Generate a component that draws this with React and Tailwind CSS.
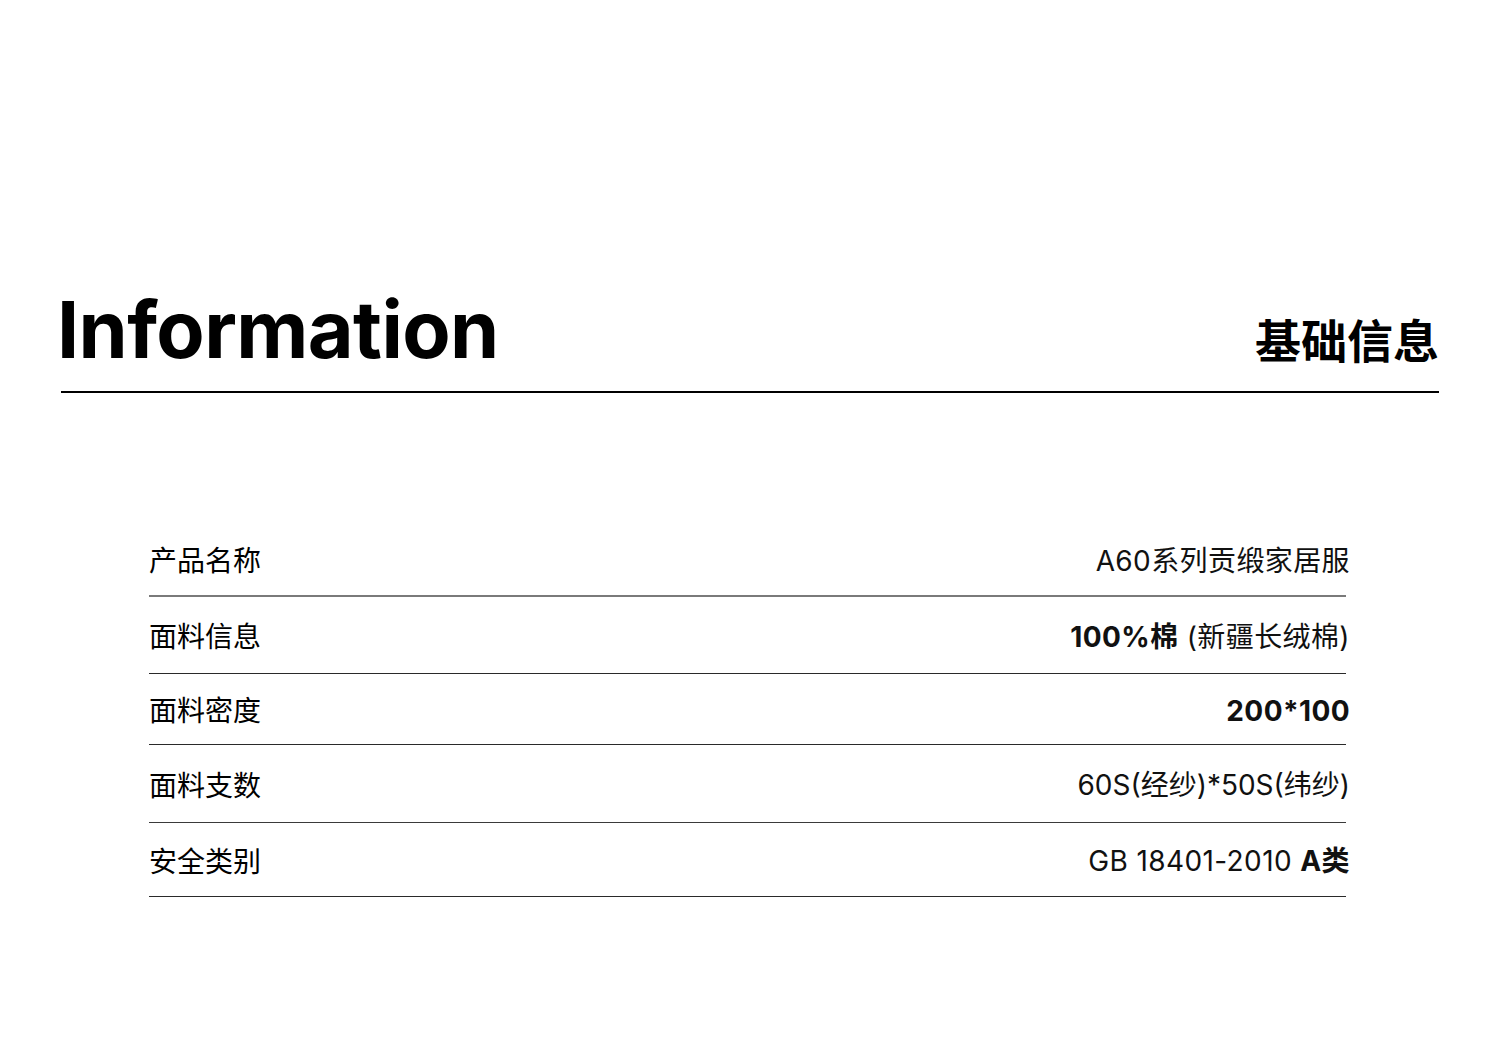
import React from "react";

const rows = [
  { label: "产品名称", h: "h-[74px]", value: <span>A60系列贡缎家居服</span>, border: "border-[#7a7a7a]" },
  {
    label: "面料信息",
    h: "h-[77px]",
    value: (
      <span>
        <span className="font-bold">100%棉</span>&nbsp;(新疆长绒棉)
      </span>
    ),
    border: "border-[#2a2a2a]",
  },
  { label: "面料密度", h: "h-[71px]", value: <span className="font-bold">200*100</span>, border: "border-[#2a2a2a]" },
  { label: "面料支数", h: "h-[78px]", value: <span className="tracking-[0px]">60S(经纱)*50S(纬纱)</span>, border: "border-[#3a3a3a]" },
  {
    label: "安全类别",
    h: "h-[74px]",
    value: (
      <span>
        GB 18401-2010&nbsp;<span className="font-bold">A类</span>
      </span>
    ),
    border: "border-[#2a2a2a]",
  },
];

export default function App() {
  return (
    <div className="w-[1500px] h-[1057px] bg-white text-black font-['Inter','Noto_Sans_CJK_SC',sans-serif]">
      <div className="px-[61px] pt-[290px]">
        <div className="flex items-end justify-between pb-[22px] border-b-2 border-black">
          <div className="text-[79px] leading-none font-bold tracking-[-0.6px] -ml-[4px]">Information</div>
          <div className="text-[46px] leading-none font-bold font-['Noto_Sans_CJK_SC',sans-serif] mb-[8px]">基础信息</div>
        </div>
      </div>
      <div className="ml-[149px] w-[1197px] mt-[130px]">
        {rows.map((r, i) => (
          <div key={i} className={`flex items-center justify-between ${r.h} border-b ${i === 0 ? "border-b-2" : ""} ${r.border}`}>
            <div className="text-[28px] font-['Noto_Sans_CJK_SC',sans-serif] leading-none">{r.label}</div>
            <div className="text-[28px] leading-none tracking-[0.4px] -mr-[4px] mt-[3px] text-[#111]">{r.value}</div>
          </div>
        ))}
      </div>
    </div>
  );
}
